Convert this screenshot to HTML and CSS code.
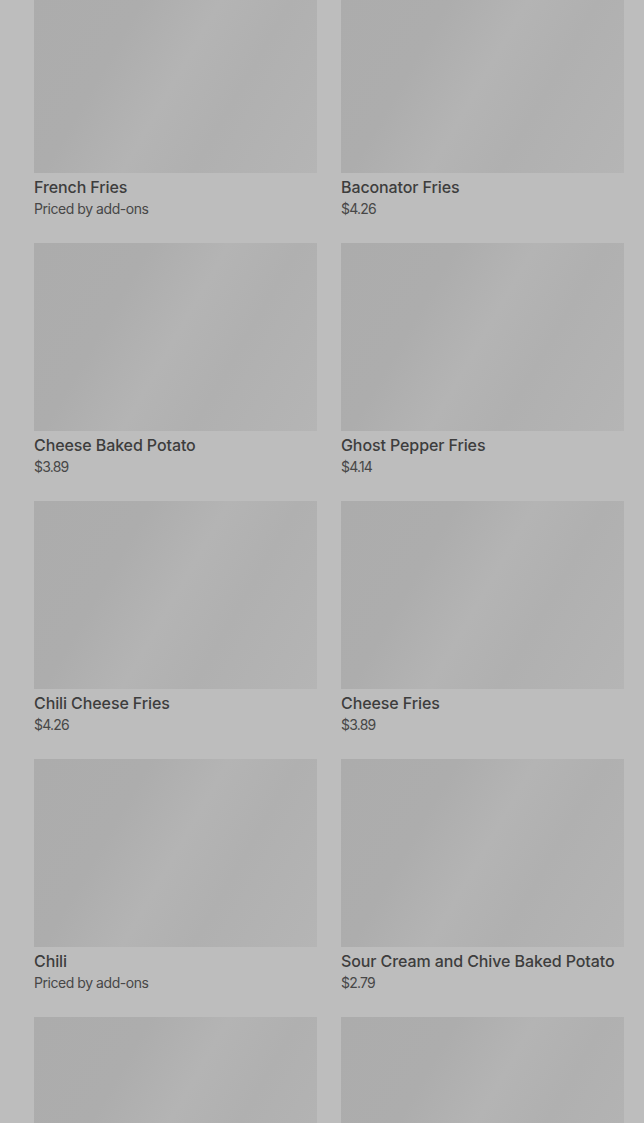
FILE: index.html
```html
<!DOCTYPE html>
<html>
<head>
<meta charset="utf-8">
<link rel="stylesheet" href="styles.css">
</head>
<body>
<main class="grid">
  <div class="card"><div class="thumb"></div><div class="title">French Fries</div><div class="price">Priced by add-ons</div></div>
  <div class="card"><div class="thumb"></div><div class="title">Baconator Fries</div><div class="price num">$4.26</div></div>
  <div class="card"><div class="thumb"></div><div class="title">Cheese Baked Potato</div><div class="price num">$3.89</div></div>
  <div class="card"><div class="thumb"></div><div class="title">Ghost Pepper Fries</div><div class="price num">$4.14</div></div>
  <div class="card"><div class="thumb"></div><div class="title">Chili Cheese Fries</div><div class="price num">$4.26</div></div>
  <div class="card"><div class="thumb"></div><div class="title">Cheese Fries</div><div class="price num">$3.89</div></div>
  <div class="card"><div class="thumb"></div><div class="title">Chili</div><div class="price">Priced by add-ons</div></div>
  <div class="card"><div class="thumb"></div><div class="title">Sour Cream and Chive Baked Potato</div><div class="price num">$2.79</div></div>
  <div class="card"><div class="thumb"></div><div class="title">&nbsp;</div><div class="price">&nbsp;</div></div>
  <div class="card"><div class="thumb"></div><div class="title">&nbsp;</div><div class="price">&nbsp;</div></div>
</main>
</body>
</html>
```
FILE: styles.css
```css
html, body {
  margin: 0;
  padding: 0;
  background: #bdbdbd;
  overflow: hidden;
}
body {
  font-family: Inter, Roboto, "Liberation Sans", sans-serif;
  height: 1123px;
}
.grid {
  display: grid;
  grid-template-columns: 283px 283px;
  column-gap: 24px;
  row-gap: 24px;
  padding: 0 20px 0 34px;
  margin-top: -15px;
}
.card {
  display: flex;
  flex-direction: column;
}
.thumb {
  height: 188px;
  background: linear-gradient(120deg, #acacac 0%, #adadad 30%, #b4b4b4 50%, #b0b0b0 68%, #b5b5b5 100%);
}
.title {
  margin-top: 4px;
  font-size: 16px;
  line-height: 20px;
  font-weight: 500;
  color: #3d3d3d;
  white-space: nowrap;
  letter-spacing: -0.1px;
}
.price {
  margin-top: 2px;
  font-size: 14px;
  line-height: 20px;
  color: #474747;
  letter-spacing: -0.45px;
}
.price.num {
  letter-spacing: -0.8px;
}
```
